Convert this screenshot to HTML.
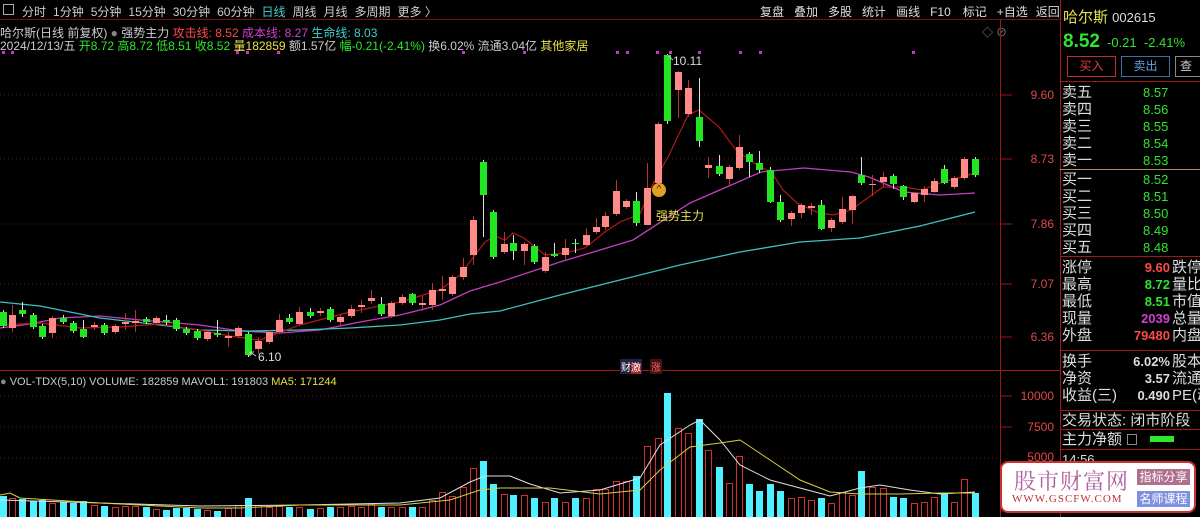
<!DOCTYPE html>
<html><head><meta charset="utf-8">
<style>
*{margin:0;padding:0;box-sizing:border-box}
body{width:1200px;height:517px;background:#000;overflow:hidden;position:relative;font-family:"Liberation Sans","Noto Sans CJK SC",sans-serif;color:#ccc;font-size:12px}
.a{position:absolute;white-space:nowrap}
.tb span{margin-right:7px}
.rp{font-size:15px;line-height:17px}
.g{color:#2ee62e}.r{color:#ff4a4a}.y{color:#e8e04a}.m{color:#d040d0}.c{color:#40d0d0}.w{color:#ddd}
</style></head><body>
<div class="a" style="left:0;top:0;width:1060px;height:20px;border-bottom:1px solid #7a1010"></div>
<div class="a" style="left:3px;top:4px;width:11px;height:11px;border:1px solid #aaa"></div>
<div class="a tb" style="left:22px;top:3px;font-size:12px;color:#ccc"><span>分时</span><span>1分钟</span><span>5分钟</span><span>15分钟</span><span>30分钟</span><span>60分钟</span><span class="c">日线</span><span>周线</span><span>月线</span><span>多周期</span><span>更多 〉</span></div>
<div class="a" style="left:760px;top:3px;font-size:12px;color:#ddd;word-spacing:0">
<span style="margin-right:10px">复盘</span><span style="margin-right:10px">叠加</span><span style="margin-right:10px">多股</span><span style="margin-right:10px">统计</span><span style="margin-right:10px">画线</span><span style="margin-right:12px">F10</span><span style="margin-right:10px">标记</span><span style="margin-right:8px">+自选</span><span>返回</span></div>
<div class="a" style="left:0;top:24px;font-size:12px">哈尔斯(日线 前复权) <span style="color:#888">●</span> 强势主力 <span class="r">攻击线: 8.52</span> <span class="m">成本线: 8.27</span> <span class="c">生命线: 8.03</span></div>
<div class="a" style="left:0;top:37px;font-size:12px">2024/12/13/五 <span class="g">开8.72 高8.72 低8.51 收8.52</span> <span class="y">量182859</span> 额1.57亿 <span class="g">幅-0.21(-2.41%)</span> 换6.02% 流通3.04亿 <span class="y">其他家居</span></div>
<div class="a" style="left:982px;top:24px;color:#888;font-size:11px">◇ ⊘</div>
<svg class="a" id="ch" style="left:0;top:0" width="1060" height="517"></svg>
<div class="a" style="left:0;top:376px;font-size:11px"><span style="color:#888">●</span> VOL-TDX(5,10) VOLUME: 182859 MAVOL1: 191803 <span class="y">MA5: 171244</span></div>
<div class="a" style="left:673px;top:54px;color:#ddd">10.11</div>
<div class="a" style="left:258px;top:350px;color:#ddd">6.10</div>
<div class="a y" style="left:656px;top:207px;font-size:12px">强势主力</div>
<div class="a" style="left:652px;top:183px;width:14px;height:14px;border-radius:50%;background:#e0a020;color:#600;font-size:10px;line-height:14px;text-align:center">^</div>
<div class="a" style="left:620px;top:359px;font-size:10px;color:#fff;background:#224;padding:0 1px">财<span style="background:#a22">激</span></div>
<div class="a" style="left:650px;top:359px;font-size:10px;color:#f66;background:#411;padding:0 1px">涨</div>
<div class="a" style="left:1000px;top:0;width:60px;font-size:12px;color:#e04848;text-align:right">
<div class="a" style="right:6px;top:88px">9.60</div><div class="a" style="right:6px;top:152px">8.73</div><div class="a" style="right:6px;top:217px">7.86</div><div class="a" style="right:6px;top:277px">7.07</div><div class="a" style="right:6px;top:330px">6.36</div>
<div class="a" style="right:6px;top:389px">10000</div><div class="a" style="right:6px;top:420px">7500</div><div class="a" style="right:6px;top:450px">5000</div></div>
<div class="a" style="left:1060px;top:0;width:1px;height:517px;background:#a01818"></div>
<div class="a y" style="left:1063px;top:6px;font-size:15px">哈尔斯 <span class="w" style="font-size:13px">002615</span></div>
<div class="a g" style="left:1063px;top:31px;font-size:19px;font-weight:bold">8.52</div>
<div class="a g" style="left:1107px;top:35px;font-size:13px">-0.21 &nbsp;-2.41%</div>
<div class="a" style="left:1067px;top:56px;width:49px;height:21px;border:1px solid #c03030;color:#e04040;text-align:center;line-height:19px;font-size:12px">买入</div>
<div class="a" style="left:1121px;top:56px;width:49px;height:21px;border:1px solid #4070a0;color:#60a0e0;text-align:center;line-height:19px;font-size:12px">卖出</div>
<div class="a" style="left:1175px;top:56px;width:30px;height:21px;border:1px solid #888;color:#ccc;line-height:19px;font-size:12px;padding-left:4px">查</div>
<div class="a" style="left:1060px;top:81px;width:140px;height:1px;background:#a01818"></div>
<div class="a rp w" style="left:1062px;top:84px">卖五<br>卖四<br>卖三<br>卖二<br>卖一</div>
<div class="a rp g" style="left:1143px;top:84px;font-size:13px">8.57<br>8.56<br>8.55<br>8.54<br>8.53</div>
<div class="a" style="left:1060px;top:169px;width:140px;height:1px;background:#b09050"></div>
<div class="a rp w" style="left:1062px;top:171px">买一<br>买二<br>买三<br>买四<br>买五</div>
<div class="a rp g" style="left:1143px;top:171px;font-size:13px">8.52<br>8.51<br>8.50<br>8.49<br>8.48</div>
<div class="a" style="left:1060px;top:256px;width:140px;height:1px;background:#a01818"></div>
<div class="a rp w" style="left:1062px;top:259px">涨停<br>最高<br>最低<br>现量<br>外盘</div>
<div class="a rp" style="left:1120px;top:259px;font-size:13px;width:50px;text-align:right;font-weight:bold"><span class="r">9.60</span><br><span class="g">8.72</span><br><span class="g">8.51</span><br><span class="m">2039</span><br><span class="r">79480</span></div>
<div class="a rp w" style="left:1172px;top:259px">跌停<br>量比<br>市值<br>总量<br>内盘</div>
<div class="a" style="left:1060px;top:350px;width:140px;height:1px;background:#a01818"></div>
<div class="a rp w" style="left:1062px;top:353px">换手<br>净资<br>收益(三)</div>
<div class="a rp w" style="left:1120px;top:353px;font-size:13px;width:50px;text-align:right;font-weight:bold">6.02%<br>3.57<br>0.490</div>
<div class="a rp w" style="left:1172px;top:353px">股本<br>流通<br>PE(动</div>
<div class="a" style="left:1060px;top:410px;width:140px;height:1px;background:#a01818"></div>
<div class="a rp w" style="left:1062px;top:412px">交易状态: 闭市阶段</div>
<div class="a" style="left:1060px;top:429px;width:140px;height:1px;background:#a01818"></div>
<div class="a rp w" style="left:1062px;top:431px">主力净额</div>
<div class="a" style="left:1127px;top:434px;width:10px;height:11px;border:1px solid #888"></div>
<div class="a" style="left:1150px;top:436px;width:24px;height:6px;background:#2ee62e"></div>
<div class="a" style="left:1060px;top:449px;width:140px;height:1px;background:#a01818"></div>
<div class="a w" style="left:1062px;top:452px;font-size:13px">14:56</div>
<div class="a" style="left:1000px;top:461px;width:196px;height:52px;background:#fff;border:2px solid #d03030;border-radius:8px">
<div class="a" style="left:12px;top:2px;font-size:22px;color:#b060a0;letter-spacing:1px;font-family:'Noto Serif CJK SC',serif">股市财富网</div>
<div class="a" style="left:10px;top:30px;font-size:11px;color:#c03030;font-family:'Liberation Serif',serif;letter-spacing:1px">WWW.GSCFW.COM</div>
<div class="a" style="left:135px;top:6px;width:53px;height:16px;background:#b07090;color:#fff;font-size:12px;text-align:center;line-height:16px">指标分享</div>
<div class="a" style="left:135px;top:28px;width:53px;height:16px;background:#8090e0;color:#fff;font-size:12px;text-align:center;line-height:16px">名师课程</div>
</div>
<script>
var C=[[3,312,326,'g'],[12,315,328,'p',305,332],[22,310,314,'g',302,317],[33,315,327,'g'],[42,326,337,'g',324,339],[52,318,333,'p',316,338],[63,318,322,'g',315,324],[73,323,331,'g'],[83,329,337,'g',320,338],[94,325,327,'p',322,330],[104,325,333,'g'],[115,326,332,'p'],[125,322,324,'p',313,330],[135,321,323,'p',310,332],[146,319,322,'g'],[156,318,323,'p'],[166,320,322,'g',315,325],[176,320,329,'g'],[186,329,333,'g'],[197,331,338,'g'],[207,332,339,'p'],[217,333,335,'g',320,337],[228,336,338,'p',330,347],[238,328,336,'p'],[248,334,355,'g'],[258,341,349,'p',337,354],[269,332,342,'p'],[279,320,332,'p',314,334],[289,318,322,'g',314,324],[299,312,324,'p',307,326],[310,312,316,'g',308,318],[320,311,313,'p',308,316],[330,309,320,'g'],[340,317,322,'p',314,326],[351,309,316,'p',305,318],[361,305,307,'p',300,313],[371,298,301,'p',290,304],[381,304,314,'g',297,316],[391,303,316,'p'],[402,297,303,'p',294,305],[412,294,303,'g',293,305],[422,303,305,'p',296,311],[432,290,305,'p',283,310],[442,289,291,'p',276,300],[452,277,294,'p'],[463,267,277,'p',258,280],[473,220,255,'p',216,265],[483,162,195,'g',160,237],[493,212,257,'g'],
[504,244,252,'p',232,254],[513,243,251,'g',235,260],[524,244,251,'p',242,265],[534,246,262,'g'],[545,257,271,'p',252,273],[554,254,256,'g',243,257],[565,248,255,'p',239,260],[575,243,244,'g',239,253],[586,235,245,'p',228,246],[596,227,232,'p',218,234],[605,216,227,'p',212,230],
[616,191,214,'p',180,216],[626,201,207,'p'],[636,201,223,'g',192,226],[647,188,225,'p',163,225],[658,124,183,'p',122,186],[667,55,121,'g',54,124],[678,72,90,'p',71,118],[688,88,114,'p',80,117],[699,117,141,'g',78,147],[708,165,168,'p',157,178],[719,166,174,'g',155,176],[729,167,179,'p',165,185],[739,147,168,'p',135,170],[749,154,162,'g',152,177],[759,163,170,'g',151,173],[770,170,202,'g',167,203],[780,202,220,'g',195,222],[791,213,219,'p',211,226],[801,205,213,'p',203,218],[811,206,208,'p',203,215],[821,205,229,'g',200,230],[831,220,228,'p',218,232],[842,209,222,'p',197,224],[852,196,210,'p',195,224],[861,175,183,'g',157,185],[872,184,185,'p',175,196],[883,177,182,'p',172,187],[893,176,184,'g',174,189],[903,186,197,'g',185,200],[914,193,202,'p',192,203],[924,189,195,'p',186,202],[934,181,192,'p',178,193],[944,169,183,'g',165,184],[954,178,187,'p'],[964,159,178,'p',157,180],[975,159,175,'g']];
var V=[496,498,499,501,500,503,502,503,501,505,506,507,506,506,507,509,510,508,508,509,510,511,508,505,498,505,507,506,507,507,509,508,507,507,506,507,504,507,507,507,507,507,500,492,496,487,468,461,484,494,495,495,498,502,498,502,498,498,489,489,481,481,476,446,438,393,428,433,419,450,467,483,456,484,491,484,491,498,497,500,498,503,492,495,471,487,488,497,498,503,502,497,493,502,479,493];
var s='';
function L(c,st,w,da){return '<path fill="none" stroke="'+st+'" stroke-width="'+(w||1)+'"'+(da?' stroke-dasharray="'+da+'"':'')+' d="'+c+'"/>';}
[95,159,224,284,337].forEach(function(y){s+=L('M0 '+y+'H1000','#6a1010',1,'1 3');s+=L('M1000 '+y+'H1012','#a01818');});
[396,427].forEach(function(y){s+=L('M0 '+y+'H1000','#6a1010',1,'1 3');s+=L('M1000 '+y+'H1012','#a01818');});
s+=L('M0 370.5H1060','#a01818');s+=L('M1000.5 20V517','#a01818');s+=L('M0 458H1000','#6a1010',1,'1 3');
s+=L('M0 328L30 324L60 318L100 316L140 320L200 325L240 331L280 333L320 330L360 322L400 315L440 305L470 291L500 282L560 262L600 250L633 240L690 203L761 172L804 168L851 172L869 177L904 192L940 195L975 193','#c040c0',1.3);
s+=L('M0 302L40 306L100 318L160 325L200 330L250 331L300 330L350 328L400 325L440 320L470 314L500 311L560 295L620 280L680 265L740 252L800 242L860 238L920 226L975 212','#40c0c0',1.3);
s+=L('M0 325L40 323L80 328L120 327L160 324L200 330L230 336L260 340L300 325L350 312L400 302L440 290L460 275L475 255L485 242L495 236L505 240L513 233L524 238L545 255L565 253L585 248L605 232L620 222L640 214L654 182L669 155L688 115L699 110L719 127L736 150L754 163L772 173L783 190L797 203L819 213L833 215L851 210L869 197L883 187L904 187L922 190L940 183L961 177L975 173','#b01818',1.2);
C.forEach(function(c,i){var x=c[0],col=c[3]=='p'?'#ff8a8a':'#22e622',wc=c[3]=='p'?'#c03030':'#ddd';var wt=c[4]||c[1]-2,wb=c[5]||c[2]+2;
s+=L('M'+(x+.5)+' '+wt+'V'+wb,wc);var h=Math.max(1,c[2]-c[1]);s+='<rect x="'+(x-3)+'" y="'+c[1]+'" width="7" height="'+h+'" fill="'+col+'"/>';
var v=V[i]||505;if(c[3]=='p')s+='<rect x="'+(x-3)+'.5" y="'+v+'.5" width="6" height="'+(517-v)+'" fill="none" stroke="#d03030"/>';else s+='<rect x="'+(x-3)+'" y="'+v+'" width="7" height="'+(517-v)+'" fill="#4ff0ff"/>';});
s+=L('M0 500L100 503L200 506L300 505L400 503L440 498L470 482L485 476L510 476L530 484L560 493L600 490L640 478L660 445L690 425L700 420L720 440L740 465L770 480L800 488L830 496L860 488L880 485L910 490L940 494L975 492','#e0e0e0');
s+=L('M0 495L10 493L20 498L100 503L200 508L240 508L300 505L400 505L450 500L480 490L500 488L550 488L600 494L640 490L660 470L690 447L720 443L740 440L770 460L800 480L830 492L860 494L900 494L940 493L975 493','#d8d040');
[2,11,236,246,277,462,523,616,626,656,669,698,739,759,912].forEach(function(x){s+='<rect x="'+x+'" y="51" width="3" height="3" fill="#d030d0"/>';});
s+=L('M668 56L673 60','#ccc');s+=L('M256 356L250 352M250 352L250 356M250 352L254 352','#ccc');
document.getElementById('ch').innerHTML=s;
</script>
</body></html>
